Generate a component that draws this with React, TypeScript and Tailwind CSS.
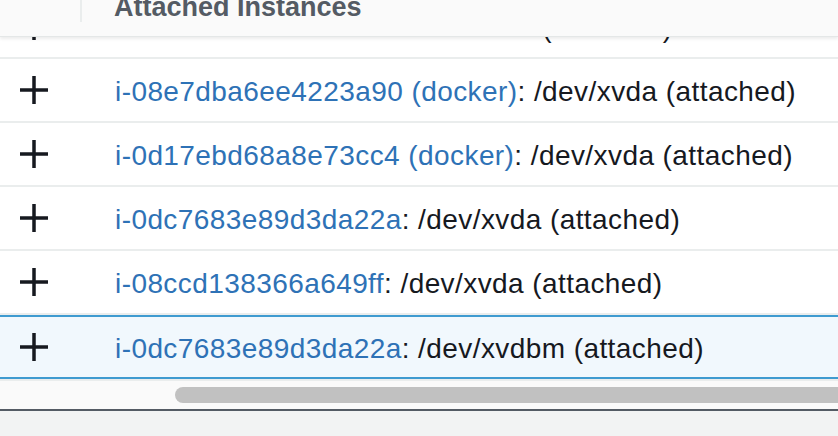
const rows = [
  { id: 'i-0b4e19c7a2f58d3e6', tag: '', dev: '/dev/xvda' },
  { id: 'i-08e7dba6ee4223a90', tag: ' (docker)', dev: '/dev/xvda' },
  { id: 'i-0d17ebd68a8e73cc4', tag: ' (docker)', dev: '/dev/xvda' },
  { id: 'i-0dc7683e89d3da22a', tag: '', dev: '/dev/xvda' },
  { id: 'i-08ccd138366a649ff', tag: '', dev: '/dev/xvda' },
];

const selected = { id: 'i-0dc7683e89d3da22a', tag: '', dev: '/dev/xvdbm' };

function Plus() {
  return (
    <svg width="30" height="30" viewBox="0 0 30 30" className="ml-[19px] shrink-0">
      <path d="M15 1v28M1 15h28" stroke="#16191f" strokeWidth="3.5" fill="none" />
    </svg>
  );
}

function RowContent({ row }: { row: { id: string; tag: string; dev: string } }) {
  return (
    <>
      <Plus />
      <div className="ml-[66px] whitespace-nowrap pt-[4px] text-[28px] tracking-[0.42px] text-[#16191f]">
        <span className="text-[#2e72b6]">
          {row.id}
          {row.tag}
        </span>
        : {row.dev} (attached)
      </div>
    </>
  );
}

export default function App() {
  return (
    <div className="flex h-[436px] w-[838px] flex-col overflow-hidden bg-white font-['Liberation_Sans',Arial,sans-serif]">
      <div className="relative z-10 flex h-[37px] shrink-0 overflow-hidden border-b border-[#e4e7e7] bg-[#fafafa] shadow-[0_2px_3px_rgba(0,0,0,0.08)]">
        <div className="flex w-[82px] shrink-0 justify-end">
          <div className="h-[22px] w-[2px] bg-[#eaeded]" />
        </div>
        <div className="-mt-[6px] pl-[32px] text-[27px] font-bold leading-[27px] whitespace-nowrap text-[#545b64]">
          Attached Instances
        </div>
      </div>

      <div className="h-[342px] shrink-0 overflow-hidden">
        <div className="-mt-[44px]">
          {rows.map((row) => (
            <div key={row.id} className="flex h-[64px] items-center border-t-2 border-[#eaeded]">
              <RowContent row={row} />
            </div>
          ))}
          <div className="border-t-2 border-[#eaeded]">
            <div className="flex h-[64px] items-center border-y-2 border-[#3f9bd0] bg-[#f1f8fd]">
              <RowContent row={selected} />
            </div>
          </div>
        </div>
      </div>

      <div className="h-[2px] shrink-0 bg-[#eaeded]" />
      <div className="flex h-[28px] shrink-0 bg-[#fafafa] pl-[175px] pt-[6px]">
        <div className="h-[16px] flex-1 rounded-l-full bg-[#c1c1c1]" />
      </div>
      <div className="h-[2px] shrink-0 bg-[#545b64]" />
      <div className="flex-1 bg-[#f2f3f3]" />
    </div>
  );
}
